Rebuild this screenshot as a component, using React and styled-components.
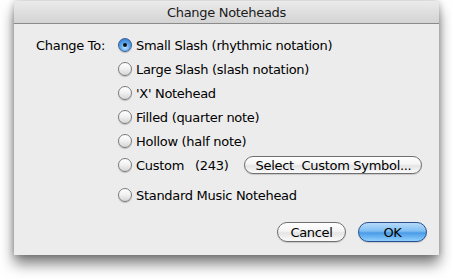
import React from "react";
import styled, { createGlobalStyle } from "styled-components";

const Global = createGlobalStyle`
  html, body { margin: 0; padding: 0; background: #ffffff; }
  body { font-family: "Lucida Grande", "DejaVu Sans", sans-serif; }
`;

const Page = styled.div`
  width: 452px;
  height: 279px;
  padding: 1px 0 0 14px;
  box-sizing: border-box;
`;

const Window = styled.div`
  width: 425px;
  height: 254px;
  background: #ececec;
  border-radius: 4px 4px 0 0;
  box-shadow: 0 9px 14px rgba(0, 0, 0, 0.5), 0 0 6px rgba(0, 0, 0, 0.25);
  display: flex;
  flex-direction: column;
  overflow: hidden;
`;

const TitleBar = styled.div`
  height: 22px;
  flex: none;
  background: linear-gradient(#ebebeb, #d3d3d3);
  border-bottom: 1px solid #8a8a8a;
  display: flex;
  align-items: center;
  justify-content: center;
  font-size: 13px;
  color: #1a1a1a;
  letter-spacing: -0.3px;
`;

const Body = styled.div`
  flex: 1;
  display: flex;
  flex-direction: column;
  padding: 9px 12px 0 0;
`;

const Form = styled.div`
  display: grid;
  grid-template-columns: 104px 1fr;
`;

const FieldLabel = styled.div`
  height: 24px;
  display: flex;
  align-items: center;
  justify-content: flex-end;
  padding-right: 13px;
  font-size: 13px;
  letter-spacing: -0.3px;
  color: #000;
`;

const Options = styled.div`
  display: flex;
  flex-direction: column;
`;

const Row = styled.label`
  height: 24px;
  display: flex;
  align-items: center;
  margin-top: ${(p) => (p.$gap ? "6px" : "0")};
  font-size: 13px;
  letter-spacing: -0.3px;
  color: #000;
`;

const Radio = styled.span`
  width: 14px;
  height: 14px;
  border-radius: 50%;
  box-sizing: border-box;
  flex: none;
  margin-right: 4px;
  display: flex;
  align-items: center;
  justify-content: center;
  border: 1px solid ${(p) => (p.$on ? "#3a5f9a" : "#7c7c7c")};
  background: ${(p) =>
    p.$on
      ? "radial-gradient(circle at 50% 70%, #bfe3ff 0%, #5aa5ec 45%, #2f6fc4 100%)"
      : "linear-gradient(#ffffff, #f0f0f0 50%, #d6d6d6)"};
  box-shadow: 0 1px 1px rgba(0, 0, 0, 0.2);
`;

const Dot = styled.span`
  width: 4px;
  height: 4px;
  border-radius: 50%;
  background: #111;
`;

const Count = styled.span`
  margin-left: 11px;
`;

const PillButton = styled.button`
  font-family: inherit;
  font-size: 13px;
  letter-spacing: -0.3px;
  height: ${(p) => p.$h || 20}px;
  width: ${(p) => p.$w}px;
  border-radius: 10px;
  padding: 0;
  color: #000;
  border: 1px solid ${(p) => (p.$primary ? "#2b4f8c" : "#6f6f6f")};
  background: ${(p) =>
    p.$primary
      ? "linear-gradient(#b7dbf9 0%, #7fbef2 45%, #4a9be6 55%, #8fd0ff 100%)"
      : "linear-gradient(#ffffff 0%, #f4f4f4 45%, #e4e4e4 55%, #fbfbfb 100%)"};
  box-shadow: 0 1px 1px rgba(0, 0, 0, 0.15);
  display: flex;
  align-items: center;
  justify-content: center;
  margin-left: ${(p) => p.$ml || 0}px;
  flex: none;
`;

const Footer = styled.div`
  display: flex;
  justify-content: flex-end;
  gap: 12px;
  margin-top: 15px;
`;

const options = [
  "Small Slash (rhythmic notation)",
  "Large Slash (slash notation)",
  "'X' Notehead",
  "Filled (quarter note)",
  "Hollow (half note)",
];

export default function App() {
  return (
    <>
      <Global />
      <Page>
        <Window>
          <TitleBar>Change Noteheads</TitleBar>
          <Body>
            <Form>
              <FieldLabel>Change To:</FieldLabel>
              <Options>
                {options.map((o, i) => (
                  <Row key={o}>
                    <Radio $on={i === 0}>{i === 0 && <Dot />}</Radio>
                    {o}
                  </Row>
                ))}
                <Row>
                  <Radio />
                  Custom<Count>(243)</Count>
                  <PillButton $w={178} $h={18} $ml={16}>
                    Select&nbsp; Custom Symbol...
                  </PillButton>
                </Row>
                <Row $gap>
                  <Radio />
                  Standard Music Notehead
                </Row>
              </Options>
            </Form>
            <Footer>
              <PillButton $w={69}>Cancel</PillButton>
              <PillButton $w={69} $primary>
                OK
              </PillButton>
            </Footer>
          </Body>
        </Window>
      </Page>
    </>
  );
}
